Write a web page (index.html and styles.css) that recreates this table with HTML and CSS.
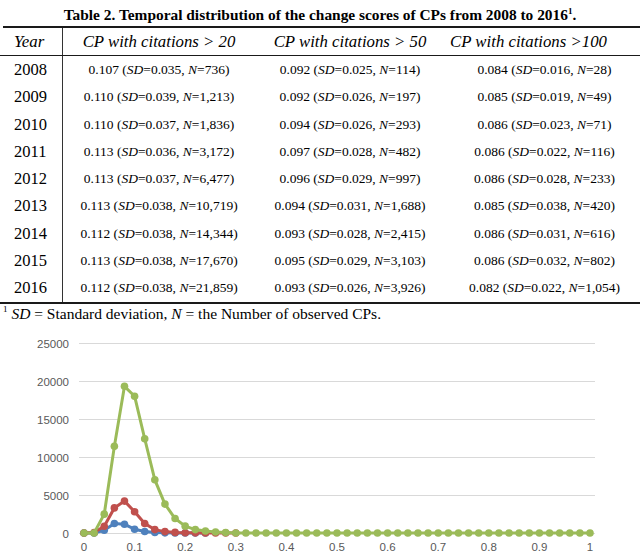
FILE: index.html
```html
<!DOCTYPE html>
<html>
<head>
<meta charset="utf-8">
<link rel="stylesheet" href="styles.css">
</head>
<body>
<div class="page">
  <div class="title">Table 2. Temporal distribution of the change scores of CPs from 2008 to 2016<sup>1</sup>.</div>
  <div class="tbl">
    <div class="row head">
      <div class="cell year">Year</div>
      <div class="cell">CP with citations &gt; 20</div>
      <div class="cell">CP with citations &gt; 50</div>
      <div class="cell c4h">CP with citations &gt;100</div>
    </div>
    <div class="body">
      <div class="row"><div class="cell year">2008</div><div class="cell">0.107 (<i>SD</i>=0.035, <i>N</i>=736)</div><div class="cell">0.092 (<i>SD</i>=0.025, <i>N</i>=114)</div><div class="cell c4">0.084 (<i>SD</i>=0.016, <i>N</i>=28)</div></div>
      <div class="row"><div class="cell year">2009</div><div class="cell">0.110 (<i>SD</i>=0.039, <i>N</i>=1,213)</div><div class="cell">0.092 (<i>SD</i>=0.026, <i>N</i>=197)</div><div class="cell c4">0.085 (<i>SD</i>=0.019, <i>N</i>=49)</div></div>
      <div class="row"><div class="cell year">2010</div><div class="cell">0.110 (<i>SD</i>=0.037, <i>N</i>=1,836)</div><div class="cell">0.094 (<i>SD</i>=0.026, <i>N</i>=293)</div><div class="cell c4">0.086 (<i>SD</i>=0.023, <i>N</i>=71)</div></div>
      <div class="row"><div class="cell year">2011</div><div class="cell">0.113 (<i>SD</i>=0.036, <i>N</i>=3,172)</div><div class="cell">0.097 (<i>SD</i>=0.028, <i>N</i>=482)</div><div class="cell c4">0.086 (<i>SD</i>=0.022, <i>N</i>=116)</div></div>
      <div class="row"><div class="cell year">2012</div><div class="cell">0.113 (<i>SD</i>=0.037, <i>N</i>=6,477)</div><div class="cell">0.096 (<i>SD</i>=0.029, <i>N</i>=997)</div><div class="cell c4">0.086 (<i>SD</i>=0.028, <i>N</i>=233)</div></div>
      <div class="row"><div class="cell year">2013</div><div class="cell">0.113 (<i>SD</i>=0.038, <i>N</i>=10,719)</div><div class="cell">0.094 (<i>SD</i>=0.031, <i>N</i>=1,688)</div><div class="cell c4">0.085 (<i>SD</i>=0.038, <i>N</i>=420)</div></div>
      <div class="row"><div class="cell year">2014</div><div class="cell">0.112 (<i>SD</i>=0.038, <i>N</i>=14,344)</div><div class="cell">0.093 (<i>SD</i>=0.028, <i>N</i>=2,415)</div><div class="cell c4">0.086 (<i>SD</i>=0.031, <i>N</i>=616)</div></div>
      <div class="row"><div class="cell year">2015</div><div class="cell">0.113 (<i>SD</i>=0.038, <i>N</i>=17,670)</div><div class="cell">0.095 (<i>SD</i>=0.029, <i>N</i>=3,103)</div><div class="cell c4">0.086 (<i>SD</i>=0.032, <i>N</i>=802)</div></div>
      <div class="row"><div class="cell year">2016</div><div class="cell">0.112 (<i>SD</i>=0.038, <i>N</i>=21,859)</div><div class="cell">0.093 (<i>SD</i>=0.026, <i>N</i>=3,926)</div><div class="cell c4">0.082 (<i>SD</i>=0.022, <i>N</i>=1,054)</div></div>
    </div>
  </div>
  <div class="foot"><sup>1</sup> <i>SD</i> = Standard deviation, <i>N</i> = the Number of observed CPs.</div>
  <svg class="chart" width="640" height="223" viewBox="0 0 640 223">
    <defs>
      <marker id="mb" viewBox="-5 -5 10 10" refX="0" refY="0" markerWidth="10" markerHeight="10" markerUnits="userSpaceOnUse"><circle r="3.8" fill="#4F81BD"/></marker>
      <marker id="mr" viewBox="-5 -5 10 10" refX="0" refY="0" markerWidth="10" markerHeight="10" markerUnits="userSpaceOnUse"><circle r="3.8" fill="#C0504D"/></marker>
      <marker id="mg" viewBox="-5 -5 10 10" refX="0" refY="0" markerWidth="10" markerHeight="10" markerUnits="userSpaceOnUse"><circle r="3.8" fill="#9BBB59"/></marker>
    </defs>
    <g class="grid">
      <line x1="79" y1="13.5" x2="595" y2="13.5"/>
      <line x1="79" y1="51.5" x2="595" y2="51.5"/>
      <line x1="79" y1="89.5" x2="595" y2="89.5"/>
      <line x1="79" y1="127.5" x2="595" y2="127.5"/>
      <line x1="79" y1="165.5" x2="595" y2="165.5"/>
      <line x1="79" y1="203.5" x2="595" y2="203.5"/>
    </g>
    <g class="ylab">
      <text x="69" y="17.5">25000</text>
      <text x="69" y="55.5">20000</text>
      <text x="69" y="93.5">15000</text>
      <text x="69" y="131.5">10000</text>
      <text x="69" y="169.5">5000</text>
      <text x="69" y="207.5">0</text>
    </g>
    <g class="xlab">
      <text x="84" y="221">0</text>
      <text x="134.6" y="221">0.1</text>
      <text x="185.2" y="221">0.2</text>
      <text x="235.8" y="221">0.3</text>
      <text x="286.4" y="221">0.4</text>
      <text x="337" y="221">0.5</text>
      <text x="387.6" y="221">0.6</text>
      <text x="438.2" y="221">0.7</text>
      <text x="488.8" y="221">0.8</text>
      <text x="539.4" y="221">0.9</text>
      <text x="590" y="221">1</text>
    </g>
    <polyline class="s sb" points="84,203 94.12,203 104.24,200.3 114.36,193.5 124.48,194.3 134.6,199.2 144.72,201.5 154.84,202.5 164.96,202.85 175.08,203 185.2,203 195.32,203 205.44,203"/>
    <polyline class="s sr" points="84,203 94.12,202.6 104.24,196.2 114.36,177.9 124.48,171.1 134.6,181.7 144.72,193.5 154.84,199.6 164.96,201.6 175.08,202.4 185.2,202.7 195.32,202.85 205.44,203 215.56,203 225.68,203 235.8,203"/>
    <polyline class="s sg" points="84,203 94.12,203 104.24,184.15 114.36,116.36 124.48,56.32 134.6,66.2 144.72,108.76 154.84,149.8 164.96,174.12 175.08,188.56 185.2,196.16 195.32,199.58 205.44,200.95 215.56,202.01 225.68,202.62 235.8,203 245.92,203 256.04,203 266.16,203 276.28,203 286.4,203 296.52,203 306.64,203 316.76,203 326.88,203 337,203 347.12,203 357.24,203 367.36,203 377.48,203 387.6,203 397.72,203 407.84,203 417.96,203 428.08,203 438.2,203 448.32,203 458.44,203 468.56,203 478.68,203 488.8,203 498.92,203 509.04,203 519.16,203 529.28,203 539.4,203 549.52,203 559.64,203 569.76,203 579.88,203 590,203"/>
  </svg>
</div>
</body>
</html>
```

FILE: styles.css
```css
html, body {
  margin: 0;
  padding: 0;
  background: #ffffff;
}
.page {
  width: 640px;
  font-family: "Liberation Serif", "Times New Roman", serif;
  color: #000;
}
.title {
  height: 26px;
  line-height: 22px;
  padding-top: 4px;
  box-sizing: border-box;
  text-align: center;
  font-weight: bold;
  font-size: 15.4px;
}
.title sup {
  font-size: 9px;
  line-height: 0;
  vertical-align: 6px;
}
.row {
  display: grid;
  grid-template-columns: 63px 192px 190px 195px;
}
.head {
  height: 29px;
  border-top: 2px solid #1a1a1a;
  margin-left: 3px;
  grid-template-columns: 60px 192px 190px 195px;
  font-style: italic;
  font-size: 16.8px;
  box-sizing: border-box;
}
.head .cell {
  line-height: 27px;
}
.body {
  border-top: 1.5px solid #1a1a1a;
  border-bottom: 2px solid #1a1a1a;
}
.body .row {
  height: 27.3px;
  font-size: 13.5px;
}
.body .cell {
  line-height: 27.3px;
}
.cell {
  text-align: center;
  white-space: nowrap;
}
.year {
  font-size: 16.5px;
  border-right: 1.5px solid #333;
  text-align: left;
  padding-left: 14px;
  box-sizing: border-box;
}
.head .year {
  padding-left: 11px;
  font-size: 16.8px;
}
.c4h {
  padding-right: 28px;
  box-sizing: border-box;
}
.c4 {
  padding-left: 4px;
  box-sizing: border-box;
}
.foot {
  height: 26px;
  line-height: 20px;
  font-size: 15.5px;
  padding-left: 3px;
  box-sizing: border-box;
}
.foot sup {
  font-size: 9px;
  line-height: 0;
  vertical-align: 7px;
}
.chart {
  display: block;
}
.grid line {
  stroke: #D9D9D9;
  stroke-width: 1;
}
.ylab text {
  font-family: "Liberation Sans", Arial, sans-serif;
  font-size: 11.5px;
  fill: #595959;
  text-anchor: end;
}
.xlab text {
  font-family: "Liberation Sans", Arial, sans-serif;
  font-size: 11.5px;
  fill: #595959;
  text-anchor: middle;
}
.s {
  fill: none;
  stroke-width: 3;
  stroke-linejoin: round;
}
.sb { stroke: #4F81BD; marker-start: url(#mb); marker-mid: url(#mb); marker-end: url(#mb); }
.sr { stroke: #C0504D; marker-start: url(#mr); marker-mid: url(#mr); marker-end: url(#mr); }
.sg { stroke: #9BBB59; marker-start: url(#mg); marker-mid: url(#mg); marker-end: url(#mg); }
```
